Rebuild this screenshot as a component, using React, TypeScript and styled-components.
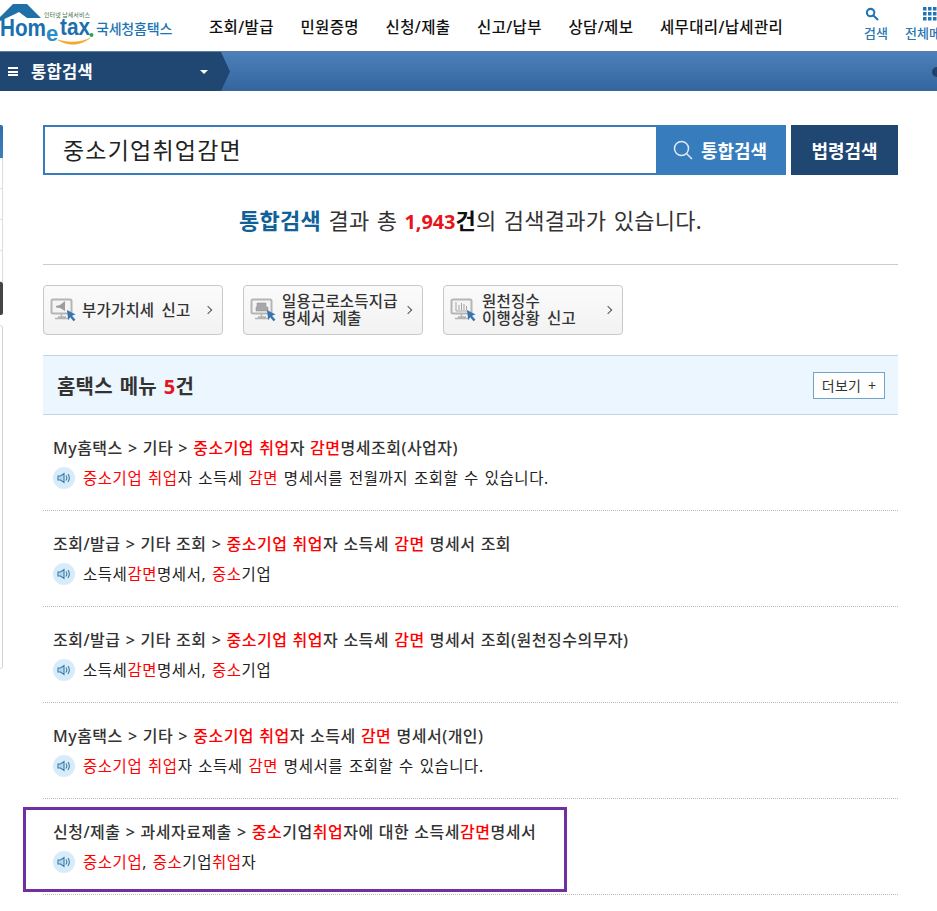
import React from 'react';
import styled, { createGlobalStyle } from 'styled-components';

const GlobalStyle = createGlobalStyle`
  html, body { margin: 0; padding: 0; background: #fff; }
  body {
    width: 937px;
    height: 911px;
    overflow: hidden;
    font-family: "Noto Sans", "Noto Sans CJK KR", sans-serif;
    color: #222;
  }
`;

const Header = styled.header`
  height: 51px;
  display: flex;
  align-items: flex-start;
  overflow: hidden;
`;

const Logo = styled.div`
  width: 209px;
  height: 51px;
  flex: none;
  display: flex;
  align-items: flex-start;
  svg { display: block; flex: none; margin-right: 1px; }
`;

const LogoName = styled.span`
  margin-top: 19px;
  font-size: 14px;
  font-weight: 500;
  letter-spacing: -0.2px;
  line-height: 20px;
  color: #1b74b5;
  white-space: nowrap;
`;

const Menu = styled.nav`
  display: flex;
  gap: 26.7px;
  padding-top: 16px;
  flex: 1;
`;

const MenuItem = styled.a`
  font-size: 15.5px;
  font-weight: 500;
  letter-spacing: 0.35px;
  line-height: 22px;
  color: #111;
  white-space: nowrap;
`;

const Tool = styled.div<{ $w: number; $icon: number }>`
  width: ${p => p.$w}px;
  flex: none;
  display: flex;
  flex-direction: column;
  align-items: flex-start;
  padding-top: 7px;
  gap: 4px;
  font-size: 13px;
  line-height: 17px;
  font-weight: 500;
  color: #2a75b3;
  white-space: nowrap;
  svg { display: block; margin-left: ${p => p.$icon}px; }
`;

const NavBar = styled.div`
  height: 40px;
  background: linear-gradient(#4d7fb9, #33659f);
  border-top: 1px solid #5a7fa8;
  box-sizing: border-box;
  display: flex;
  position: relative;
`;

const NavTab = styled.div`
  width: 221px;
  background: #204672;
  display: flex;
  align-items: center;
  padding: 0 0 2px 8px;
  box-sizing: border-box;
  color: #fff;
  font-size: 16.5px;
  font-weight: 700;
  letter-spacing: 0.3px;
  position: relative;
  &::after {
    content: '';
    position: absolute;
    left: 221px;
    top: 0;
    width: 9px;
    height: 39px;
    background: #204672;
    clip-path: polygon(0 0, 100% 50%, 0 100%);
  }
`;

const Burger = styled.span`
  width: 10px;
  height: 9px;
  margin: 2px 13px 0 0;
  background: repeating-linear-gradient(#fff 0 2px, transparent 2px 3.5px);
`;

const Caret = styled.span`
  margin: 2px 0 0 107px;
  width: 0;
  height: 0;
  border-left: 4px solid transparent;
  border-right: 4px solid transparent;
  border-top: 4px solid #fff;
`;

const NavDot = styled.span`
  position: absolute;
  right: -5px;
  top: 15px;
  width: 10px;
  height: 10px;
  border-radius: 50%;
  background: #20426b;
`;

const Body = styled.div`
  display: flex;
  align-items: flex-start;
`;

const Side = styled.aside`
  width: 3px;
  flex: none;
  margin-top: 34px;
  display: flex;
  flex-direction: column;
`;

const SideCap = styled.div`
  height: 33px;
  background: linear-gradient(#2f6db0, #3f7dbd);
  border-radius: 0 2px 0 0;
`;

const SideCell = styled.div`
  height: 31px;
  box-sizing: border-box;
  border-right: 1px solid #ddd;
  border-bottom: 1px solid #e2e2e2;
`;

const SideDark = styled.div`
  height: 33px;
  background: #444;
  border-radius: 0 2px 2px 0;
`;

const SidePanel = styled.div`
  height: 344px;
  margin-top: 10px;
  box-sizing: border-box;
  border-right: 1px solid #d4d4d4;
  border-top: 1px solid #ddd;
  border-bottom: 1px solid #ddd;
  border-radius: 0 3px 3px 0;
`;

const Main = styled.main`
  width: 855px;
  margin-left: 40px;
  flex: none;
`;

const SearchRow = styled.div`
  margin-top: 34px;
  display: flex;
  height: 50px;
`;

const SearchBox = styled.div`
  width: 613px;
  box-sizing: border-box;
  border: 2px solid #377dbd;
  border-right: 0;
  padding-left: 18px;
  font-size: 23px;
  letter-spacing: 1.2px;
  line-height: 47px;
  color: #222;
`;

const SearchBtn = styled.button`
  width: 130px;
  border: 0;
  padding: 0 2px 0 0;
  background: #377dbd;
  color: #fff;
  font: 700 18px "Noto Sans", "Noto Sans CJK KR", sans-serif;
  display: flex;
  align-items: center;
  justify-content: center;
  gap: 8px;
`;

const LawBtn = styled.button`
  width: 107px;
  margin-left: 5px;
  border: 0;
  padding: 0;
  background: #204672;
  color: #fff;
  font: 700 18px "Noto Sans", "Noto Sans CJK KR", sans-serif;
`;

const Summary = styled.p`
  margin: 0;
  height: 90px;
  box-sizing: border-box;
  padding-top: 28px;
  text-align: center;
  font-size: 22px;
  line-height: 35px;
  color: #333;
  border-bottom: 1px solid #ccc;
  letter-spacing: 0.3px;
  word-spacing: 1.2px;
`;

const SumTitle = styled.b`
  color: #0f6198;
`;

const SumCount = styled.b`
  color: #111;
  em { font-style: normal; font-size: 20px; letter-spacing: -0.1px; color: #e8141c; }
`;

const Shortcuts = styled.div`
  display: flex;
  gap: 20px;
  margin-top: 20px;
`;

const Shortcut = styled.a`
  width: 180px;
  height: 50px;
  box-sizing: border-box;
  border: 1px solid #c8c8c8;
  border-radius: 4px;
  background: linear-gradient(#fbfbfb, #f2f2f2);
  display: flex;
  align-items: center;
  padding-left: 6px;
  font-size: 15.5px;
  font-weight: 500;
  line-height: 17px;
  color: #333;
  letter-spacing: 0.2px;
  word-spacing: 3px;
  svg { flex: none; }
`;

const ShortcutText = styled.span`
  flex: 1;
  margin-left: 4px;
  white-space: nowrap;
`;

const Chevron = styled.span`
  width: 6px;
  height: 6px;
  margin-right: 11px;
  flex: none;
  box-sizing: border-box;
  border-top: 1px solid #555;
  border-right: 1px solid #555;
  transform: rotate(45deg);
`;

const SectionHead = styled.div`
  margin-top: 20px;
  height: 60px;
  box-sizing: border-box;
  background: #ebf6fe;
  border-top: 1px solid #c3d4e3;
  border-bottom: 1px solid #c3d4e3;
  display: flex;
  align-items: center;
  justify-content: space-between;
  padding: 0 13px 0 14px;
  font-size: 20px;
  font-weight: 700;
  letter-spacing: 0.2px;
  word-spacing: 1.5px;
  color: #333;
  em { font-style: normal; color: #e8141c; }
`;

const MoreBtn = styled.button`
  width: 72px;
  height: 27px;
  padding: 0;
  box-sizing: border-box;
  border: 1px solid #6fa3c9;
  background: #fff;
  color: #333;
  font: 400 14px "Noto Sans", "Noto Sans CJK KR", sans-serif;
  letter-spacing: 0.2px;
  word-spacing: 3px;
`;

const Item = styled.li`
  position: relative;
  height: 96px;
  box-sizing: border-box;
  padding: 21px 0 0 10px;
  border-bottom: 1px dotted #bbb;
`;

const List = styled.ul`
  list-style: none;
  margin: 0;
  padding: 0;
`;

const ItemTitle = styled.div`
  font-size: 16px;
  font-weight: 500;
  line-height: 24px;
  color: #333;
  letter-spacing: 0.5px;
  word-spacing: 0.5px;
  white-space: nowrap;
  mark { background: none; color: #f00; }
`;

const ItemSub = styled.div`
  margin-top: 7px;
  display: flex;
  align-items: center;
  font-size: 15.5px;
  line-height: 22px;
  color: #222;
  letter-spacing: 0.55px;
  word-spacing: 1.2px;
  white-space: nowrap;
  mark { background: none; color: #f00; }
`;

const Speaker = styled.span`
  width: 22px;
  height: 22px;
  flex: none;
  margin-right: 8px;
  border-radius: 50%;
  background: #d6ecfb;
  display: flex;
  align-items: center;
  justify-content: center;
`;

const Callout = styled.div`
  position: absolute;
  left: -20px;
  top: 8px;
  width: 544px;
  height: 85px;
  box-sizing: border-box;
  border: 3px solid #7030a0;
  pointer-events: none;
`;

const LogoMark = () => (
  <svg width="95" height="51" viewBox="0 0 95 51">
    <path d="M0 17L13 4h14l14 14H27l-8-6-6 3-13 6z" fill="#1f6fa8" />
    <text x="44" y="17" fontSize="6" fill="#3f6f4a" textLength="46" fontFamily="Noto Sans CJK KR">인터넷 납세서비스</text>
    <text x="0" y="36" fontSize="24" fontWeight="700" fill="#1a6fae" textLength="46" lengthAdjust="spacingAndGlyphs" fontFamily="Liberation Sans">Hom</text>
    <text x="46" y="41" fontSize="22" fontWeight="700" fill="#2a8fc8" fontFamily="Liberation Sans">e</text>
    <text x="60" y="35" fontSize="23" fontWeight="700" fill="#1a6fae" textLength="30" lengthAdjust="spacingAndGlyphs" fontFamily="Liberation Sans">tax</text>
    <circle cx="91.500" cy="35" r="2" fill="#2aa84a" />
    <path d="M58 40c10 6 22 6 32-2-9 5-21 5-32 2z" fill="#f0a830" stroke="#f0a830" strokeWidth=".6" />
  </svg>
);

const MonitorIcon = ({ kind }: { kind: 'horn' | 'print' | 'chart' }) => (
  <svg width="28" height="28" viewBox="0 0 28 28" fill="none">
    <rect x="1.500" y="3.500" width="20" height="14" rx="1.500" fill="#f4f4f4" stroke="#b5b5b5" strokeWidth="2" />
    <path d="M8 21h8M11.500 18v3M5 22.500h13" stroke="#b5b5b5" strokeWidth="1.500" />
    {kind === 'horn' && <path d="M6 10l4-1 5-4v10l-5-3-4-.5z" fill="#9d9d9d" />}
    {kind === 'print' && <path d="M7 7h9v4h2v4H6v-4h1z" fill="#a8a8a8" stroke="#8f8f8f" strokeWidth=".5" />}
    {kind === 'chart' && <path d="M6 6v9h12M9 14V9M11.500 14V7M14 14v-6M16.500 14v-4" stroke="#a5a5a5" strokeWidth="1" />}
    <path d="M17 14l8.500 4.500-3.500 1.300 3.500 4-2 1.500-3.300-4-2 3z" fill="#3b73b1" />
  </svg>
);

const SpeakerIcon = () => (
  <svg width="14" height="12" viewBox="0 0 14 12" fill="none" stroke="#3d7ba8" strokeWidth="1.100">
    <path d="M1 4h2.500L7 1.500v9L3.500 8H1z" fill="#bcd8ec" />
    <path d="M9 3.500c1 1.500 1 3.500 0 5M11 2c1.700 2.500 1.700 5.500 0 8" />
  </svg>
);

const menus = ['조회/발급', '민원증명', '신청/제출', '신고/납부', '상담/제보', '세무대리/납세관리'];

const Hl = ({ children }: { children: React.ReactNode }) => <mark>{children}</mark>;

const App: React.FC = () => (
  <>
    <GlobalStyle />
    <Header>
      <Logo>
        <LogoMark />
        <LogoName>국세청홈택스</LogoName>
      </Logo>
      <Menu>
        {menus.map(m => <MenuItem key={m}>{m}</MenuItem>)}
      </Menu>
      <Tool $w={41} $icon={1}>
        <svg width="14" height="14" viewBox="0 0 15 15" fill="none" stroke="#1f75b8" strokeWidth="2.200">
          <circle cx="6" cy="6" r="4" />
          <path d="M9 9l5 5" />
        </svg>
        검색
      </Tool>
      <Tool $w={32} $icon={18}>
        <svg width="14" height="14" viewBox="0 0 14 14" fill="#1f75b8">
          {[0, 5, 10].flatMap(y => [0, 5, 10].map(x => <rect key={`${x}-${y}`} x={x} y={y} width="3.500" height="3.500" />))}
        </svg>
        전체메뉴
      </Tool>
    </Header>
    <NavBar>
      <NavTab>
        <Burger />
        통합검색
        <Caret />
      </NavTab>
      <NavDot />
    </NavBar>
    <Body>
      <Side>
        <SideCap />
        <SideCell />
        <SideCell />
        <SideCell />
        <SideCell />
        <SideDark />
        <SidePanel />
      </Side>
      <Main>
        <SearchRow>
          <SearchBox>중소기업취업감면</SearchBox>
          <SearchBtn>
            <svg width="20" height="20" viewBox="0 0 20 20" fill="none" stroke="#dfeaf5" strokeWidth="1.500">
              <circle cx="8.500" cy="8.500" r="7" />
              <path d="M13.500 13.500l5.500 5.500" />
            </svg>
            통합검색
          </SearchBtn>
          <LawBtn>법령검색</LawBtn>
        </SearchRow>
        <Summary>
          <SumTitle>통합검색</SumTitle> 결과 총 <SumCount><em>1,943</em>건</SumCount>의 검색결과가 있습니다.
        </Summary>
        <Shortcuts>
          <Shortcut>
            <MonitorIcon kind="horn" />
            <ShortcutText>부가가치세 신고</ShortcutText>
            <Chevron />
          </Shortcut>
          <Shortcut>
            <MonitorIcon kind="print" />
            <ShortcutText>일용근로소득지급<br />명세서 제출</ShortcutText>
            <Chevron />
          </Shortcut>
          <Shortcut>
            <MonitorIcon kind="chart" />
            <ShortcutText>원천징수<br />이행상황 신고</ShortcutText>
            <Chevron />
          </Shortcut>
        </Shortcuts>
        <SectionHead>
          <span>홈택스 메뉴 <em>5</em>건</span>
          <MoreBtn>더보기 +</MoreBtn>
        </SectionHead>
        <List>
          <Item>
            <ItemTitle>My홈택스 &gt; 기타 &gt; <Hl>중소기업 취업</Hl>자 <Hl>감면</Hl>명세조회(사업자)</ItemTitle>
            <ItemSub><Speaker><SpeakerIcon /></Speaker><span><Hl>중소기업 취업</Hl>자 소득세 <Hl>감면</Hl> 명세서를 전월까지 조회할 수 있습니다.</span></ItemSub>
          </Item>
          <Item>
            <ItemTitle>조회/발급 &gt; 기타 조회 &gt; <Hl>중소기업 취업</Hl>자 소득세 <Hl>감면</Hl> 명세서 조회</ItemTitle>
            <ItemSub><Speaker><SpeakerIcon /></Speaker><span>소득세<Hl>감면</Hl>명세서, <Hl>중소</Hl>기업</span></ItemSub>
          </Item>
          <Item>
            <ItemTitle>조회/발급 &gt; 기타 조회 &gt; <Hl>중소기업 취업</Hl>자 소득세 <Hl>감면</Hl> 명세서 조회(원천징수의무자)</ItemTitle>
            <ItemSub><Speaker><SpeakerIcon /></Speaker><span>소득세<Hl>감면</Hl>명세서, <Hl>중소</Hl>기업</span></ItemSub>
          </Item>
          <Item>
            <ItemTitle>My홈택스 &gt; 기타 &gt; <Hl>중소기업 취업</Hl>자 소득세 <Hl>감면</Hl> 명세서(개인)</ItemTitle>
            <ItemSub><Speaker><SpeakerIcon /></Speaker><span><Hl>중소기업 취업</Hl>자 소득세 <Hl>감면</Hl> 명세서를 조회할 수 있습니다.</span></ItemSub>
          </Item>
          <Item>
            <ItemTitle>신청/제출 &gt; 과세자료제출 &gt; <Hl>중소</Hl>기업<Hl>취업</Hl>자에 대한 소득세<Hl>감면</Hl>명세서</ItemTitle>
            <ItemSub><Speaker><SpeakerIcon /></Speaker><span><Hl>중소기업</Hl>, <Hl>중소</Hl>기업<Hl>취업</Hl>자</span></ItemSub>
            <Callout />
          </Item>
        </List>
      </Main>
    </Body>
  </>
);

export default App;
